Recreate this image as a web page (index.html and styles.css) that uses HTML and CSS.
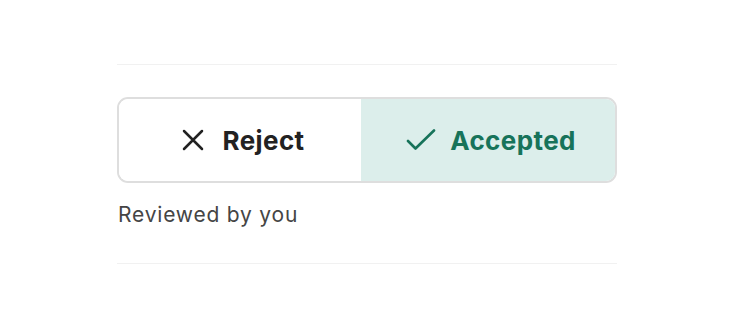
FILE: index.html
```html
<!DOCTYPE html>
<html>
<head>
<meta charset="utf-8">
<link rel="stylesheet" href="styles.css">
</head>
<body>
<div class="review">
  <hr class="divider">
  <div class="toggle">
    <button class="opt opt-reject">
      <svg class="icon" width="22" height="22" viewBox="0 0 22 22"><path d="M2 2 L20 20 M20 2 L2 20" stroke="#222" stroke-width="2.5" stroke-linecap="round" fill="none"/></svg>
      <span>Reject</span>
    </button>
    <button class="opt opt-accept">
      <svg class="icon" width="30" height="22" viewBox="0 0 30 22"><polyline points="2,12 9.5,19.5 28,1.5" stroke="#17735a" stroke-width="2.6" stroke-linecap="round" stroke-linejoin="round" fill="none"/></svg>
      <span>Accepted</span>
    </button>
  </div>
  <p class="note">Reviewed by you</p>
  <hr class="divider">
</div>
</body>
</html>
```
FILE: styles.css
```css
html, body {
  margin: 0;
  background: #ffffff;
}
body {
  font-family: Inter, "Noto Sans", sans-serif;
}
.review {
  width: 500px;
  margin-left: 117px;
  padding-top: 64px;
  display: flex;
  flex-direction: column;
}
.divider {
  margin: 0;
  border: 0;
  height: 1px;
  background: #f1f1f1;
}
.toggle {
  margin-top: 32px;
  display: flex;
  height: 86px;
  box-sizing: border-box;
  border: 2px solid #dedede;
  border-radius: 11px;
  overflow: hidden;
}
.opt {
  border: 0;
  margin: 0;
  padding: 0 0 0 6px;
  display: flex;
  align-items: center;
  justify-content: center;
  gap: 19px;
  font-family: inherit;
  font-size: 26px;
  font-weight: 700;
  letter-spacing: 0.4px;
  cursor: pointer;
}
.opt-reject {
  width: 242px;
  background: #ffffff;
  color: #222222;
}
.opt-accept {
  flex: 1;
  background: #dceeeb;
  color: #17735a;
  gap: 14px;
}
.icon {
  display: block;
}
.note {
  margin: 20px 0 0 1px;
  font-size: 21px;
  line-height: 24px;
  letter-spacing: 0.8px;
  color: #454545;
  height: 60px;
}
```
